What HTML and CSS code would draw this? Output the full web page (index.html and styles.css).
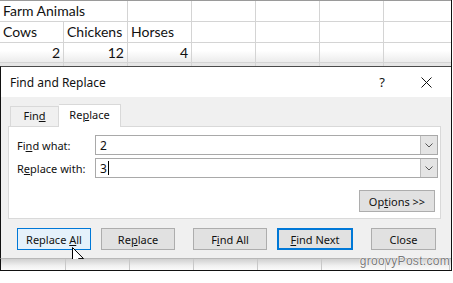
FILE: index.html
```html
<!DOCTYPE html>
<html lang="en">
<head>
<meta charset="UTF-8">
<title>Find and Replace</title>
<link rel="stylesheet" href="styles.css">
</head>
<body>
    <div class="frame">
        <div class="sheet">
            <div class="row row1">
                <div class="cell wide">Farm Animals</div>
                <div class="cell"></div>
                <div class="cell"></div>
                <div class="cell"></div>
                <div class="cell"></div>
                <div class="cell"></div>
                <div class="cell last"></div>
            </div>
            <div class="row row2">
                <div class="cell">Cows</div>
                <div class="cell">Chickens</div>
                <div class="cell">Horses</div>
                <div class="cell"></div>
                <div class="cell"></div>
                <div class="cell"></div>
                <div class="cell last"></div>
            </div>
            <div class="row row3">
                <div class="cell num">2</div>
                <div class="cell num">12</div>
                <div class="cell num">4</div>
                <div class="cell"></div>
                <div class="cell"></div>
                <div class="cell"></div>
                <div class="cell last"></div>
            </div>
            <div class="row row4">
                <div class="cell"></div>
                <div class="cell"></div>
                <div class="cell"></div>
                <div class="cell"></div>
                <div class="cell"></div>
                <div class="cell"></div>
                <div class="cell last"></div>
            </div>
        </div>

        <div class="dialog">
            <div class="titlebar">
                <span class="title">Find and Replace</span>
                <span class="help">?</span>
                <svg class="close-x" width="11" height="11" viewBox="0 0 11 11">
                    <path d="M0.5 0.5 L10.5 10.5 M10.5 0.5 L0.5 10.5" stroke="#111" stroke-width="1" fill="none"/>
                </svg>
            </div>
            <div class="body">
                <div class="tabs">
                    <div class="tab">Fin<u>d</u></div>
                    <div class="tab active">Re<u>p</u>lace</div>
                </div>
                <div class="panel">
                    <div class="field">
                        <label class="lbl">Fi<u>n</u>d what:</label>
                        <div class="combo">
                            <span class="value">2</span>
                            <span class="drop">
                                <svg width="8" height="5" viewBox="0 0 8 5"><path d="M0.5 0.5 L4 4 L7.5 0.5" stroke="#555" fill="none"/></svg>
                            </span>
                        </div>
                    </div>
                    <div class="field">
                        <label class="lbl">R<u>e</u>place with:</label>
                        <div class="combo">
                            <span class="value">3<span class="caret"></span></span>
                            <span class="drop">
                                <svg width="8" height="5" viewBox="0 0 8 5"><path d="M0.5 0.5 L4 4 L7.5 0.5" stroke="#555" fill="none"/></svg>
                            </span>
                        </div>
                    </div>
                    <div class="opt-row">
                        <button class="btn options">Op<u>t</u>ions &gt;&gt;</button>
                    </div>
                </div>
                <div class="buttons">
                    <button class="btn hover">Replace <u>A</u>ll</button>
                    <button class="btn">Re<u>p</u>lace</button>
                    <button class="btn gap">F<u>i</u>nd All</button>
                    <button class="btn default"><u>F</u>ind Next</button>
                    <button class="btn gap close">Close</button>
                </div>
            </div>
            <svg class="cursor" width="13" height="20" viewBox="0 0 13 20">
                <path d="M0.5 0.5 L0.5 16 L4.2 12.4 L6.8 18.5 L9 17.5 L6.5 11.6 L11.5 11.6 Z" fill="#fff" stroke="#000" stroke-width="1"/>
            </svg>
        </div>

        <div class="strip">
            <div class="cell"></div>
            <div class="cell"></div>
            <div class="cell"></div>
            <div class="cell"></div>
            <div class="cell"></div>
            <div class="cell"></div>
            <div class="cell last"></div>
            <span class="mark">groovyPost.com</span>
        </div>
    </div>
</body>
</html>
```

FILE: styles.css
```css
body {
    margin: 0;
    background: #fff;
}

.frame {
    width: 451px;
    border-right: 1px solid #111;
    border-bottom: 1px solid #111;
    background: #fff;
}

/* spreadsheet behind the dialog */
.sheet {
    font-family: Lato, "Liberation Sans", sans-serif;
    font-size: 14px;
    color: #111;
    border-top: 1px solid #9a9a9a;
}

.row {
    display: flex;
    border-bottom: 1px solid #d4d4d4;
}

.row1 { height: 20px; }
.row2 { height: 20px; }
.row3 {
    height: 19px;
    background: linear-gradient(#fff 40%, #ececec);
}
.row4 {
    height: 3px;
    background: #e6e6e6;
    border-bottom: none;
}

.cell {
    flex: none;
    border-right: 1px solid #d4d4d4;
    padding: 0 3px;
    line-height: 20px;
    white-space: nowrap;
}

.row .cell {
    width: 57px;
}

.cell.last {
    border-right: none;
}

.cell.wide {
    border-right-color: transparent;
    position: relative;
    z-index: 1;
}

.num {
    text-align: right;
}

/* dialog */
.dialog {
    position: relative;
    border-top: 1px solid #4a4a4a;
    border-left: 1px solid #111;
    border-bottom: 1px solid #b8b8b8;
    font-family: "Noto Sans", sans-serif;
    font-size: 11px;
    color: #111;
}

.titlebar {
    height: 30px;
    background: #fff;
    display: flex;
    align-items: center;
    padding-left: 9px;
}

.title {
    font-size: 12px;
    flex: 1;
}

.help {
    font-size: 13px;
    margin-right: 36px;
}

.close-x {
    margin-right: 19px;
}

.body {
    background: #f0f0f0;
    padding: 7px 10px 7px 7px;
    height: 147px;
}

.tabs {
    display: flex;
    align-items: flex-end;
    padding-left: 2px;
    height: 22px;
}

.tab {
    height: 20px;
    line-height: 18px;
    width: 49px;
    text-align: center;
    border: 1px solid #d9d9d9;
    border-bottom: none;
    background: #f0f0f0;
    box-sizing: border-box;
}

.tab.active {
    width: 62px;
    height: 23px;
    background: #fff;
    margin-bottom: -1px;
    position: relative;
    z-index: 1;
    line-height: 20px;
    border-left: none;
}

.panel {
    background: #fff;
    border: 1px solid #d9d9d9;
    height: 83px;
    padding: 8px 2px 0 8px;
}

.field {
    display: flex;
    align-items: center;
    margin-bottom: 3px;
}

.lbl {
    width: 78px;
}

.combo {
    flex: 1;
    height: 18px;
    border: 1px solid #a9a9a9;
    display: flex;
    align-items: center;
    background: #fff;
}

.value {
    flex: 1;
    padding-left: 4px;
    font-size: 12px;
    display: flex;
    align-items: center;
}

.caret {
    width: 1px;
    height: 14px;
    background: #000;
    margin-left: 1px;
}

.drop {
    width: 16px;
    height: 18px;
    background: #e4e4e4;
    border-left: 1px solid #bcbcbc;
    display: flex;
    align-items: center;
    justify-content: center;
}

.opt-row {
    display: flex;
    justify-content: flex-end;
    padding-top: 9px;
    padding-right: 3px;
}

.btn {
    font-family: "Noto Sans", sans-serif;
    font-size: 11px;
    color: #111;
    background: #e1e1e1;
    border: 1px solid #adadad;
    width: 74px;
    height: 22px;
    padding: 0;
    box-sizing: border-box;
}

.options {
    width: 76px;
}

.btn.hover {
    background: #e5f1fb;
    border-color: #0078d7;
}

.btn.default {
    border: 2px solid #0078d7;
    width: 76px;
}

.buttons {
    display: flex;
    gap: 10px;
    padding: 9px 0 0 9px;
}

.buttons .gap {
    margin-left: 8px;
}

.close {
    width: 65px;
}

.cursor {
    position: absolute;
    left: 71px;
    top: 180px;
}

/* strip of sheet under the dialog */
.strip {
    position: relative;
    display: flex;
    height: 11px;
    border-left: 1px solid #111;
    background: linear-gradient(#d0d0d0, #f0f0f0 60%, #fbfbfb);
}

.strip .cell {
    width: 63px;
    padding: 0;
    border-right: 1px solid #c8c8c8;
}

.strip .cell:first-child {
    width: 64px;
}

.mark {
    position: absolute;
    right: 1px;
    top: -5px;
    font-family: "Liberation Sans", sans-serif;
    font-size: 12px;
    color: #7a7a7a;
    text-shadow: 0 0 1px #fff, 0 0 1px #fff, 0 0 1px #fff;
    letter-spacing: 0.3px;
}
```
